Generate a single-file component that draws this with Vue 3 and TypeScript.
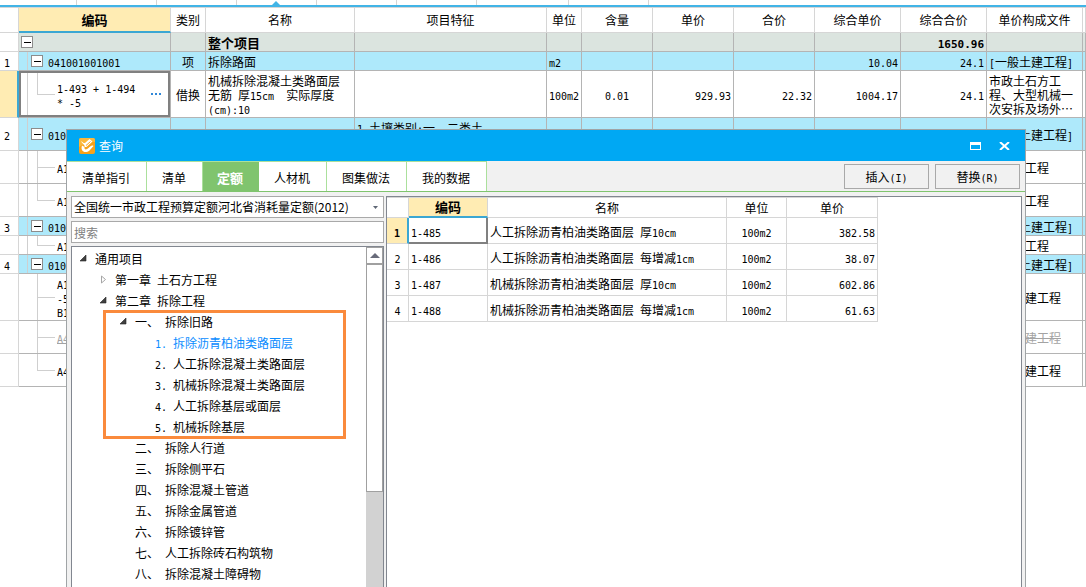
<script setup lang="ts">
import { h, ref } from 'vue'
import type { FunctionalComponent } from 'vue'

// Splits a string so that half-width characters take exactly half the width of a Chinese character.
const Mixed: FunctionalComponent<{ text: string }> = (props) =>
  h(
    'span',
    { class: 'mixed' },
    (props.text.match(/[\x20-\x7e]+|[^\x20-\x7e]+/g) ?? []).map((run) =>
      /^[\x20-\x7e]/.test(run) ? h('span', { class: 'half' }, run) : run,
    ),
  )
Mixed.props = ['text']

interface Row {
  no?: string
  kind: 'total' | 'item' | 'sub'
  size: 'one' | 'two' | 'three'
  code?: string
  type?: string
  name?: string
  feature?: string
  unit?: string
  amount?: string
  price?: string
  sum?: string
  fullPrice?: string
  fullSum?: string
  file?: string
  more?: string
  trunk?: boolean
  last?: boolean
  current?: boolean
  removed?: boolean
}

const headers = ['类别', '名称', '项目特征', '单位', '含量', '单价', '合价', '综合单价', '综合合价', '单价构成文件', '']

const rows: Row[] = [
  { kind: 'total', size: 'one', name: '整个项目', fullSum: '1650.96' },
  { no: '1', kind: 'item', size: 'one', code: '041001001001', type: '项', name: '拆除路面', unit: 'm2', fullPrice: '10.04', fullSum: '24.1', file: '[一般土建工程]', trunk: true },
  { kind: 'sub', size: 'three', code: '1-493 + 1-494\n* -5', type: '借换', name: '机械拆除混凝土类路面层\n无筋 厚15cm  实际厚度\n(cm):10', unit: '100m2', amount: '0.01', price: '929.93', sum: '22.32', fullPrice: '1004.17', fullSum: '24.1', file: '市政土石方工\n程、大型机械一\n次安拆及场外…', more: '人', trunk: true, last: true, current: true },
  { no: '2', kind: 'item', size: 'two', code: '010', feature: '1.土壤类别:一、二类土\n ', file: '[一般土建工程]', trunk: true },
  { kind: 'sub', size: 'two', code: 'A1', file: '土石方工程', more: '人', trunk: true },
  { kind: 'sub', size: 'two', code: 'A1', file: '土石方工程', more: '人', trunk: true, last: true },
  { no: '3', kind: 'item', size: 'one', code: '010', file: '[一般土建工程]', trunk: true },
  { kind: 'sub', size: 'one', code: 'A1', file: '土石方工程', more: '人', trunk: true, last: true },
  { no: '4', kind: 'item', size: 'one', code: '010', file: '[一般土建工程]', trunk: true },
  { kind: 'sub', size: 'three', code: 'A1\n-5\nB1', file: '一般土建工程', more: '人' },
  { kind: 'sub', size: 'two', code: 'A4', file: '一般土建工程', more: '人', removed: true },
  { kind: 'sub', size: 'two', code: 'A4', file: '一般土建工程', more: '人', last: true },
]

const tabs = ['清单指引', '清单', '定额', '人材机', '图集做法', '我的数据']
const activeTab = ref('定额')
const book = ref('全国统一市政工程预算定额河北省消耗量定额(2012)')
const keyword = ref('')

interface Node {
  text: string
  level: number
  state?: 'open' | 'closed'
  active?: boolean
}
const before: Node[] = [
  { text: '通用项目', level: 0, state: 'open' },
  { text: '第一章 土石方工程', level: 1, state: 'closed' },
  { text: '第二章 拆除工程', level: 1, state: 'open' },
]
const marked: Node[] = [
  { text: '一、 拆除旧路', level: 2, state: 'open' },
  { text: '1. 拆除沥青柏油类路面层', level: 3, active: true },
  { text: '2. 人工拆除混凝土类路面层', level: 3 },
  { text: '3. 机械拆除混凝土类路面层', level: 3 },
  { text: '4. 人工拆除基层或面层', level: 3 },
  { text: '5. 机械拆除基层', level: 3 },
]
const after: Node[] = [
  '二、 拆除人行道',
  '三、 拆除侧平石',
  '四、 拆除混凝土管道',
  '五、 拆除金属管道',
  '六、 拆除镀锌管',
  '七、 人工拆除砖石构筑物',
  '八、 拆除混凝土障碍物',
].map((text) => ({ text, level: 2 }))
const groups = [
  { id: 'before', nodes: before },
  { id: 'marked', nodes: marked },
  { id: 'after', nodes: after },
]

const quotas = [
  { code: '1-485', name: '人工拆除沥青柏油类路面层 厚10cm', price: '382.58' },
  { code: '1-486', name: '人工拆除沥青柏油类路面层 每增减1cm', price: '38.07' },
  { code: '1-487', name: '机械拆除沥青柏油类路面层 厚10cm', price: '602.86' },
  { code: '1-488', name: '机械拆除沥青柏油类路面层 每增减1cm', price: '61.63' },
]
const chosen = ref(0)
</script>

<template>
  <div class="app">
    <div class="strip">
      <i v-for="n in 8" :key="n" class="tick"></i>
      <svg class="notch" width="8" height="4" viewBox="0 0 8 4"><path d="M0 4 4 0 8 4Z" fill="#42b4e6" /></svg>
    </div>

    <table class="bill">
      <colgroup>
        <col class="w-no" /><col class="w-code" /><col class="w-type" /><col class="w-name" /><col />
        <col class="w-type" /><col class="w-amount" /><col class="w-price" /><col class="w-price" />
        <col class="w-full" /><col class="w-full" /><col class="w-file" /><col class="w-more" />
      </colgroup>
      <thead>
        <tr>
          <th></th>
          <th class="sorted">编码</th>
          <th v-for="(title, i) in headers" :key="i">{{ title }}</th>
        </tr>
      </thead>
      <tbody>
        <tr v-for="(row, i) in rows" :key="i" :class="[row.kind, row.size, { current: row.current, removed: row.removed }]">
          <td class="no"><Mixed :text="row.no ?? ''" /></td>
          <td class="code" :class="{ trunk: row.trunk, last: row.last }">
            <div class="code-in">
              <button v-if="row.kind !== 'sub'" class="fold" aria-label="折叠"></button>
              <Mixed :text="row.code ?? ''" />
              <button v-if="row.current" class="dots" aria-label="更多"><i></i><i></i><i></i></button>
            </div>
          </td>
          <td class="mid"><Mixed :text="row.type ?? ''" /></td>
          <td><Mixed :text="row.name ?? ''" /></td>
          <td><Mixed :text="row.feature ?? ''" /></td>
          <td><Mixed :text="row.unit ?? ''" /></td>
          <td class="mid"><Mixed :text="row.amount ?? ''" /></td>
          <td class="num"><Mixed :text="row.price ?? ''" /></td>
          <td class="num"><Mixed :text="row.sum ?? ''" /></td>
          <td class="num"><Mixed :text="row.fullPrice ?? ''" /></td>
          <td class="num"><Mixed :text="row.fullSum ?? ''" /></td>
          <td><Mixed :text="row.file ?? ''" /></td>
          <td><Mixed :text="row.more ?? ''" /></td>
        </tr>
      </tbody>
    </table>

    <section class="dialog" role="dialog" aria-label="查询">
      <header class="title">
        <svg width="16" height="16" viewBox="0 0 16 16">
          <rect width="16" height="16" rx="2" fill="#f7a21b" />
          <path d="M0 9V2Q0 0 2 0H14Q16 0 16 2V4Q8 3 0 9Z" fill="#fbb83c" />
          <path d="M2 3.500C3.500 3 4 5.500 6 5L10.500 1 13.500 3.500 8 8.500C6.500 9.500 5 9 5.500 7.500Z" fill="#fff" />
          <path d="M3 7.500C1 13 6 16 10.500 12.500L14.500 8C13 7 11.500 8 9.500 10C7.500 12 5 12 5.500 9Z" fill="#fff" />
          <path d="M7 7.500 11.500 3.500" stroke="#f7a21b" fill="none" />
        </svg>
        <span class="caption">查询</span>
        <button class="win" aria-label="最大化">
          <svg width="11" height="8" viewBox="0 0 11 8"><path d="M0 0H11V8H0ZM1 3V7H10V3Z" fill="#fff" fill-rule="evenodd" /></svg>
        </button>
        <button class="win" aria-label="关闭">
          <svg width="11" height="8" viewBox="0 0 11 8"><path d="M1 0 10 8M10 0 1 8" stroke="#fff" stroke-width="2" /></svg>
        </button>
      </header>

      <div class="bar">
        <nav class="tabs">
          <button v-for="tab in tabs" :key="tab" class="tab" :class="{ on: tab === activeTab }" @click="activeTab = tab">{{ tab }}</button>
        </nav>
        <div class="actions">
          <button class="act"><Mixed text="插入(I)" /></button>
          <button class="act"><Mixed text="替换(R)" /></button>
        </div>
      </div>

      <div class="body">
        <div class="side">
          <div class="combo">
            <select v-model="book" class="field" aria-label="定额库">
              <option>全国统一市政工程预算定额河北省消耗量定额(2012)</option>
            </select>
            <svg class="caret" width="5" height="3" viewBox="0 0 5 3"><path d="M0 0H5L2.500 3Z" fill="#5f6775" /></svg>
          </div>
          <input v-model="keyword" class="field" type="text" placeholder="搜索" aria-label="搜索" />
          <div class="tree">
            <div class="nodes">
              <ul v-for="group in groups" :key="group.id" :class="group.id">
                <li v-for="node in group.nodes" :key="node.text" class="node" :class="['l' + node.level, { active: node.active }]">
                  <span class="arrow">
                    <svg v-if="node.state === 'open'" width="7" height="7" viewBox="0 0 7 7"><path d="M6 0V6H0Z" fill="#404040" stroke="#222" stroke-width=".6" /></svg>
                    <svg v-else-if="node.state === 'closed'" width="7" height="9" viewBox="0 0 7 9"><path d="M1.500 1V8L5.500 4.500Z" fill="#fff" stroke="#a6a6a6" /></svg>
                  </span>
                  <Mixed :text="node.text" />
                </li>
              </ul>
            </div>
            <div class="scroll">
              <button class="up" aria-label="向上滚动">
                <svg width="10" height="5" viewBox="0 0 10 5"><path d="M0 5 5 0 10 5Z" fill="#686b7a" /></svg>
              </button>
              <div class="thumb"></div>
            </div>
          </div>
        </div>

        <div class="panel">
          <table class="quota">
            <colgroup><col class="q-no" /><col class="q-code" /><col class="q-name" /><col class="q-unit" /><col class="q-price" /></colgroup>
            <thead>
              <tr><th></th><th class="sorted">编码</th><th>名称</th><th>单位</th><th>单价</th></tr>
            </thead>
            <tbody>
              <tr v-for="(q, i) in quotas" :key="q.code" :class="{ chosen: i === chosen }" @click="chosen = i">
                <td class="no"><Mixed :text="String(i + 1)" /></td>
                <td class="qcode"><Mixed :text="q.code" /></td>
                <td><Mixed :text="q.name" /></td>
                <td class="mid"><Mixed text="100m2" /></td>
                <td class="num"><Mixed :text="q.price" /></td>
              </tr>
            </tbody>
          </table>
        </div>
      </div>
    </section>
  </div>
</template>

<style>
body {
  margin: 0;
  background: #fff;
}
.mixed {
  white-space: pre;
}
.mixed .half {
  font-family: "DejaVu Sans Mono", "Liberation Mono", monospace;
  font-size: 10px;
  line-height: 10px;
}
</style>

<style scoped>
.app {
  position: relative;
  min-height: 100vh;
  overflow: hidden;
  color: #000;
  font: 12px/14px "Noto Sans CJK SC", sans-serif;
}
.app *,
.app *::before,
.app *::after {
  box-sizing: border-box;
}
button,
input,
select {
  margin: 0;
  padding: 0;
  border: 0;
  border-radius: 0;
  background: none;
  color: inherit;
  font: inherit;
}
svg {
  display: block;
}

.strip {
  position: relative;
  display: flex;
  height: 7px;
  border-bottom: 2px solid #42b4e6;
}
.tick {
  width: 80px;
  border-right: 1px solid #d6d6d6;
}
.tick:first-child {
  width: 77px;
}
.tick:nth-child(7) {
  width: 92px;
}
.notch {
  position: absolute;
  left: 272px;
  bottom: 0;
}

table {
  border-collapse: separate;
  border-spacing: 0;
  table-layout: fixed;
}
th,
td {
  padding: 2px 2px 0;
  border-right: 1px solid #b4b4b4;
  border-bottom: 1px solid #b4b4b4;
  text-align: left;
  overflow: hidden;
}
th {
  padding: 0;
  border-color: #d6d6d6;
  font-weight: normal;
  text-align: center;
}
.sorted {
  border-bottom: 2px solid #3ba7d3;
  background: #ffecb3;
  font-size: 13px;
  font-weight: bold;
}
.bill {
  width: 100%;
}
.bill thead th {
  height: 26px;
  border-top: 1px solid #d6d6d6;
}
.w-no { width: 19px; }
.w-code { width: 152px; }
.w-type { width: 35px; }
.w-name { width: 149px; }
.w-amount { width: 71px; }
.w-price { width: 81px; }
.w-full { width: 86px; }
.w-file { width: 96px; }
.w-more { width: 3px; }
.one td { height: 19px; }
.two td { height: 33px; }
.three td { height: 47px; }
.app .mid {
  padding: 2px 0 0;
  text-align: center;
}
.app .num {
  text-align: right;
}
.app .no {
  padding: 2px 4px 0 0;
  border-color: #d6d6d6;
  background: #fff;
  text-align: center;
}
.total td {
  background-color: #dbe4df;
  font-size: 13px;
  font-weight: bold;
}
.total :deep(.half) {
  font-size: 11px;
}
.item td {
  background-color: #aee9fb;
}
.removed {
  color: #a3a3a3;
  text-decoration: line-through;
}
.bill .code {
  padding: 0;
  background-repeat: no-repeat;
}
.code-in {
  display: flex;
  align-items: center;
  gap: 5px;
}
.code-in .mixed {
  padding-top: 2px;
}
.total .code-in {
  padding-left: 2px;
}
.item .code-in {
  padding-left: 12px;
}
.sub .code-in {
  padding-left: 38px;
}
/* Branch lines: trunk of the project, trunk of the item, and the twig to the row. */
.item .trunk {
  background-image: linear-gradient(#cfcfcf, #cfcfcf);
  background-position: 8px 0;
  background-size: 1px 100%;
}
.sub .code {
  background-image: linear-gradient(#cfcfcf, #cfcfcf), linear-gradient(#cfcfcf, #cfcfcf);
  background-position: 18px 0, 18px 50%;
  background-size: 1px 100%, 18px 1px;
}
.sub .last {
  background-size: 1px 50%, 18px 1px;
}
.sub .trunk {
  background-image: linear-gradient(#cfcfcf, #cfcfcf), linear-gradient(#cfcfcf, #cfcfcf), linear-gradient(#cfcfcf, #cfcfcf);
  background-position: 18px 0, 18px 50%, 8px 0;
  background-size: 1px 100%, 18px 1px, 1px 100%;
}
.sub .trunk.last {
  background-size: 1px 50%, 18px 1px, 1px 100%;
}
.fold {
  width: 12px;
  height: 12px;
  border: 1px solid #8c8c8c;
  background: linear-gradient(#000, #000) center / 7px 1px no-repeat #fff;
}
.current .no {
  border-right: 2px solid #3ba7d3;
  background: #ffecb3;
}
.current .code {
  box-shadow: inset 0 0 0 2px #808080;
}
.dots {
  display: flex;
  gap: 2px;
  margin-left: auto;
  padding: 4px 9px 4px 0;
}
.dots i {
  width: 2px;
  height: 2px;
  background: #2f87d8;
}

.dialog {
  position: absolute;
  inset: 129px 60px 0 66px;
  display: flex;
  flex-direction: column;
  border: 1px solid #a0a4a6;
  border-bottom: 0;
  background: #f1f1f1;
}
.title {
  display: flex;
  align-items: center;
  height: 31px;
  padding: 0 15px 0 12px;
  background: #00a8f3;
  color: #fff;
}
.caption {
  flex: 1;
  padding-left: 4px;
}
.win {
  margin-left: 18px;
}
.bar {
  display: flex;
  justify-content: space-between;
  height: 31px;
  border-bottom: 1px solid #80c46e;
}
.tabs {
  display: flex;
  border-top: 1px solid #abe09c;
}
.tab {
  padding: 3px 16px 0 15px;
  border-right: 1px solid #abe09c;
  background: #fff;
}
.tab.on {
  padding: 3px 15px 0 14px;
  border-color: #80c46e;
  background: #80c46e;
  color: #fff;
  font-size: 13px;
  font-weight: bold;
}
.actions {
  display: flex;
  gap: 6px;
  padding: 3px 5px 2px 0;
}
.act {
  width: 85px;
  border: 1px solid #a9a9a9;
}
.body {
  display: flex;
  flex: 1;
  gap: 2px;
  min-height: 0;
  padding: 4px 3px 0 4px;
}
.side {
  display: flex;
  flex-direction: column;
  gap: 3px;
  width: 313px;
}
.combo {
  position: relative;
}
.field {
  display: block;
  width: 100%;
  height: 22px;
  padding: 0 2px;
  border: 1px solid #a9a9a9;
  background: #fff;
  appearance: none;
}
.field::placeholder {
  color: #808080;
}
.caret {
  position: absolute;
  top: 10px;
  right: 6px;
}
.tree {
  display: flex;
  flex: 1;
  min-height: 0;
  border: 1px solid #828790;
  border-bottom: 0;
  background: #fff;
}
.nodes {
  flex: 1;
  padding-top: 1px;
  overflow: hidden;
}
ul {
  position: relative;
  margin: 0;
  padding: 0;
  list-style: none;
}
.marked::after {
  content: "";
  position: absolute;
  inset: -1px 20px -2px 31px;
  border: 3px solid #fa8a3c;
  pointer-events: none;
}
.node {
  display: flex;
  align-items: center;
  height: 21px;
}
.l0 { padding-left: 8px; }
.l1 { padding-left: 28px; }
.l2 { padding-left: 48px; }
.l3 { padding-left: 68px; }
.arrow {
  width: 15px;
}
.active {
  color: #0a8cff;
}
.scroll {
  width: 17px;
  background: #d2d2d2;
}
.up {
  display: flex;
  align-items: center;
  justify-content: center;
  width: 100%;
  height: 17px;
  border: 1px solid #a0a0a0;
  background: #fff;
}
.thumb {
  height: 228px;
  border: 1px solid #a0a0a0;
  background: #fff;
}
.panel {
  flex: 1;
  border: 1px solid #828790;
  border-bottom: 0;
  background: #fff;
}
.quota {
  width: 491px;
}
.quota th,
.quota td {
  border-color: #d6d6d6;
}
.quota th {
  height: 21px;
  border-top: 1px solid #d6d6d6;
}
.quota .sorted {
  border-bottom: 2px solid #3ba7d3;
}
.quota td {
  height: 26px;
}
.quota .no {
  padding: 2px 0 0;
}
.q-no { width: 22px; }
.q-code { width: 79px; }
.q-name { width: 239px; }
.q-unit { width: 60px; }
.q-price { width: 91px; }
.quota .chosen .no {
  border-right: 2px solid #3ba7d3;
  background: #ffecb3;
  font-weight: bold;
}
.chosen .qcode {
  box-shadow: inset -1px -1px 0 #808080;
  border-right-color: #808080;
  border-bottom-color: #808080;
}
</style>
